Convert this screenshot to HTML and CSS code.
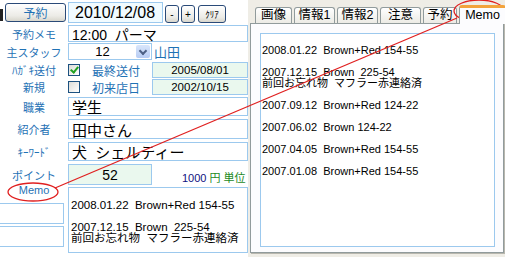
FILE: index.html
```html
<!DOCTYPE html>
<html lang="ja">
<head>
  <meta charset="UTF-8" />
  <title>顧客カルテ</title>
  <link rel="stylesheet" href="styles.css">
</head>
<body>
  <div class="page">
    <div class="left">
      <div class="row r1">
        <span class="edge"></span>
        <button class="btn main">予約</button>
        <div class="field date">2010/12/08</div>
        <button class="btn sm">-</button>
        <button class="btn sm">+</button>
        <button class="btn clr">ｸﾘｱ</button>
      </div>
      <div class="row r2">
        <span class="label">予約メモ</span>
        <div class="field big">12:00&nbsp; パーマ</div>
      </div>
      <div class="row r3">
        <span class="label">主スタッフ</span>
        <div class="select"><span class="sel-val">12</span><span class="sel-btn"></span></div>
        <span class="staff">山田</span>
      </div>
      <div class="row r4">
        <span class="label">ﾊｶﾞｷ送付</span>
        <span class="check on"></span>
        <span class="label2">最終送付</span>
        <div class="field green">2005/08/01</div>
      </div>
      <div class="row r5">
        <span class="label">新規</span>
        <span class="check"></span>
        <span class="label2">初来店日</span>
        <div class="field green">2002/10/15</div>
      </div>
      <div class="row r6">
        <span class="label">職業</span>
        <div class="field large">学生</div>
      </div>
      <div class="row r7">
        <span class="label">紹介者</span>
        <div class="field large">田中さん</div>
      </div>
      <div class="row r8">
        <span class="label">ｷｰﾜｰﾄﾞ</span>
        <div class="field large">犬&nbsp; シェルティー</div>
      </div>
      <div class="row r9">
        <span class="label">ポイント</span>
        <div class="field points">52</div>
        <span class="unit"><b>1000</b> 円 単位</span>
      </div>
      <div class="row r10">
        <div class="memo-side">
          <span class="label">Memo</span>
          <div class="side-box"></div>
          <div class="side-box"></div>
        </div>
        <div class="field memo">2008.01.22  Brown+Red 154-55

2007.12.15  Brown  225-54
前回お忘れ物  マフラー赤連絡済</div>
      </div>
    </div>

    <div class="right">
      <div class="tabs">
        <span class="tab t1">画像</span>
        <span class="tab t2">情報1</span>
        <span class="tab t2">情報2</span>
        <span class="tab t2">注意</span>
        <span class="tab t5">予約</span>
        <span class="tab active">Memo</span>
      </div>
      <div class="tab-body">
        <div class="memo-box">2008.01.22  Brown+Red 154-55

2007.12.15  Brown  225-54
前回お忘れ物  マフラー赤連絡済

2007.09.12  Brown+Red 124-22

2007.06.02  Brown 124-22

2007.04.05  Brown+Red 154-55

2007.01.08  Brown+Red 154-55</div>
      </div>
    </div>

    <svg class="annot" width="505" height="257" viewBox="0 0 505 257">
      <ellipse cx="33" cy="192" rx="25" ry="9" fill="none" stroke="#e02020" stroke-width="1.3"/>
      <ellipse cx="479" cy="11" rx="25" ry="11" fill="none" stroke="#e02020" stroke-width="1.3"/>
      <line x1="55" y1="188" x2="457" y2="18" stroke="#e02020" stroke-width="1.3"/>
    </svg>
  </div>
</body>
</html>
```

FILE: styles.css
```css
body {
  margin: 0;
  padding: 0;
  background-color: white;
  font-family: "Liberation Sans", "Noto Sans CJK JP", sans-serif;
}

.page {
  position: relative;
  display: flex;
  width: 505px;
  height: 257px;
  overflow: hidden;
}

/* left form */
.left {
  width: 248px;
  flex-shrink: 0;
  display: flex;
  flex-direction: column;
}

.row {
  display: flex;
  align-items: center;
}

.r1 { margin-top: 2px; height: 21px; }
.r2 { margin-top: 2px; height: 17px; }
.r3 { margin-top: 1px; height: 17px; }
.r4 { margin-top: 2px; height: 16px; }
.r5 { margin-top: 1px; height: 16px; }
.r6 { margin-top: 2px; height: 19px; }
.r7 { margin-top: 3px; height: 20px; }
.r8 { margin-top: 3px; height: 19px; }
.r9 { margin-top: 3px; height: 21px; }
.r10 { margin-top: 2px; height: 66px; align-items: flex-start; }

.label {
  width: 68px;
  flex-shrink: 0;
  text-align: center;
  font-size: 11px;
  color: #1f72b5;
}

.label2 {
  width: 72px;
  text-align: center;
  font-size: 12px;
  color: #1f72b5;
}

.field {
  box-sizing: border-box;
  height: 100%;
  flex: 1;
  border: 1px solid #9cc9ee;
  background: white;
  color: black;
  padding-left: 3px;
  display: flex;
  align-items: center;
  white-space: pre;
}

.edge {
  width: 3px;
  height: 12px;
  background: #222;
  margin-right: 2px;
  align-self: flex-end;
  margin-bottom: 2px;
}

.btn {
  box-sizing: border-box;
  height: 18px;
  padding: 0;
  border: 1px solid #2a4a78;
  border-radius: 3px;
  background: linear-gradient(#ffffff, #ecebe6 70%, #d8d6cc);
  font-family: inherit;
  color: black;
  font-size: 10px;
}

.btn.main {
  width: 61px;
  height: 19px;
  margin-right: 2px;
  color: #1f72b5;
  font-size: 12px;
}

.btn.sm {
  width: 14px;
  margin-left: 2px;
  align-self: flex-end;
}

.btn.clr {
  width: 28px;
  margin-left: 3px;
  align-self: flex-end;
  font-size: 9px;
}

.field.date {
  flex: none;
  width: 95px;
  font-size: 16px;
  padding-left: 6px;
  background: #f1fbff;
}

.field.big {
  font-size: 14px;
}

.select {
  box-sizing: border-box;
  width: 84px;
  height: 100%;
  border: 1px solid #9cc9ee;
  display: flex;
  align-items: center;
}

.sel-val {
  flex: 1;
  text-align: center;
  font-size: 13px;
}

.sel-btn {
  width: 14px;
  height: 13px;
  margin-right: 1px;
  border-radius: 2px;
  background: linear-gradient(#d9e6fb, #b7ccf3);
  position: relative;
}

.sel-btn::after {
  content: "";
  position: absolute;
  left: 4px;
  top: 3px;
  width: 4px;
  height: 4px;
  border-right: 2px solid #4d6185;
  border-bottom: 2px solid #4d6185;
  transform: rotate(45deg);
}

.staff {
  margin-left: 2px;
  font-size: 13px;
  color: #1f72b5;
}

.check {
  box-sizing: border-box;
  width: 12px;
  height: 12px;
  border: 1px solid #1c5180;
  background: linear-gradient(135deg, #dcdcd7, #ffffff);
  position: relative;
}

.check.on::after {
  content: "";
  position: absolute;
  left: 3px;
  top: 0px;
  width: 3px;
  height: 6px;
  border-right: 2px solid #21a121;
  border-bottom: 2px solid #21a121;
  transform: rotate(40deg);
}

.field.green {
  flex: none;
  width: 96px;
  background: #eaf8ee;
  font-size: 11.5px;
  justify-content: center;
  padding-left: 0;
}

.field.large {
  font-size: 15px;
}

.field.points {
  flex: none;
  width: 84px;
  background: #eaf8ee;
  font-size: 14px;
  justify-content: center;
  padding-left: 0;
}

.unit {
  margin-left: 30px;
  margin-top: 4px;
  font-size: 11px;
  color: #1d8a1d;
}

.unit b {
  font-weight: normal;
  color: #101080;
}

.memo-side {
  width: 68px;
  flex-shrink: 0;
  display: flex;
  flex-direction: column;
}

.memo-side .label {
  width: 68px;
  height: 20px;
  margin-top: -4px;
  line-height: 14px;
}

.side-box {
  box-sizing: border-box;
  width: 65px;
  height: 21px;
  margin-left: -1px;
  border: 1px solid #9cc9ee;
  margin-bottom: 2px;
}

.field.memo {
  display: block;
  font-size: 11.5px;
  line-height: 11px;
  padding-top: 12px;
  padding-left: 2px;
}

/* right tab panel */
.right {
  flex: 1;
  background: #efede6;
  padding-left: 2px;
  padding-top: 5px;
}

.tabs {
  display: flex;
  align-items: flex-end;
  height: 18px;
  padding-left: 5px;
  gap: 2px;
}

.tab {
  box-sizing: border-box;
  height: 16px;
  border: 1px solid #919b9c;
  border-bottom: none;
  border-radius: 3px 3px 0 0;
  background: linear-gradient(#ffffff, #ecebe5);
  font-size: 12.5px;
  text-align: center;
  line-height: 15px;
}

.tab.t1 { width: 37px; }
.tab.t2 { width: 41px; }
.tab.t5 { width: 34px; }

.tab.active {
  width: 47px;
  height: 19px;
  background: #fcfcfe;
  border-top: 3px solid #f3a33c;
  line-height: 14px;
  position: relative;
  z-index: 1;
  margin-bottom: -1px;
}

.tab-body {
  box-sizing: border-box;
  width: 254px;
  height: 230px;
  border: 1px solid #919b9c;
  box-shadow: 1px 1px 0 #b8b7ae;
  background: #fcfcfe;
  padding: 9px 8px 0 9px;
}

.memo-box {
  box-sizing: border-box;
  width: 235px;
  height: 214px;
  border: 1px solid #9cc9ee;
  background: white;
  font-size: 11px;
  line-height: 11px;
  padding-top: 11px;
  padding-left: 1px;
  white-space: pre;
}

.annot {
  position: absolute;
  left: 0;
  top: 0;
  pointer-events: none;
}
```
